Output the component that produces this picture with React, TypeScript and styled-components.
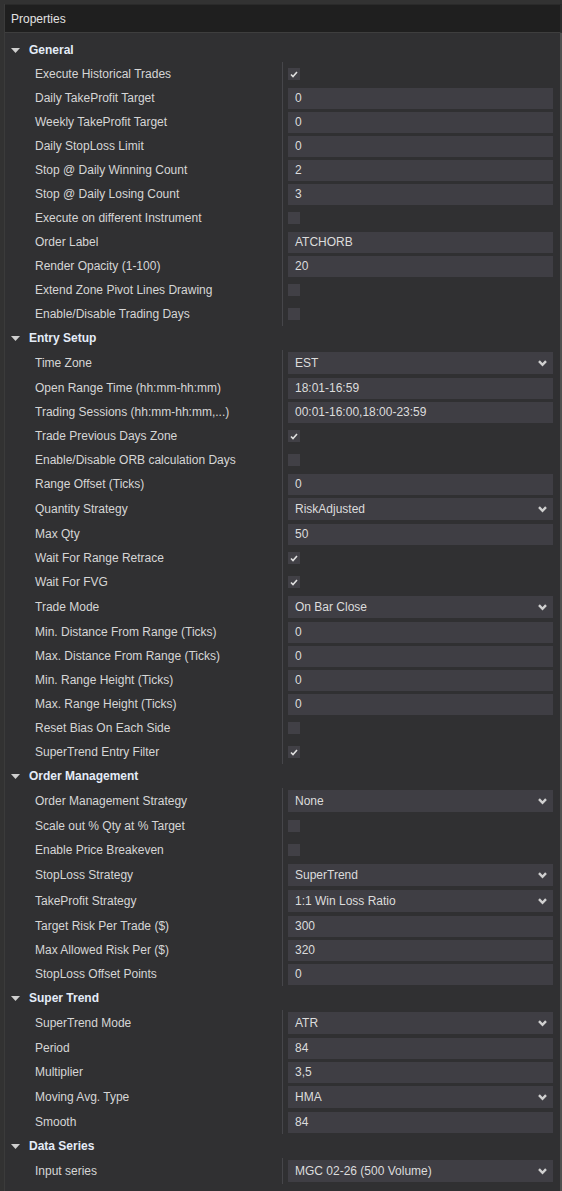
import React from "react";
import styled, { createGlobalStyle } from "styled-components";

const Global = createGlobalStyle`
  html, body { margin: 0; padding: 0; background: #323232; }
  body { font-family: "Liberation Sans", Arial, sans-serif; font-size: 12px; }
  #root { width: 562px; height: 1191px; overflow: hidden; }
`;

type Prop =
  | { label: string; kind: "text"; value: string }
  | { label: string; kind: "check"; value: boolean }
  | { label: string; kind: "select"; value: string };

type Section = { title: string; rows: Prop[] };

const t = (label: string, value: string): Prop => ({ label, kind: "text", value });
const c = (label: string, value: boolean): Prop => ({ label, kind: "check", value });
const s = (label: string, value: string): Prop => ({ label, kind: "select", value });

const sections: Section[] = [
  {
    title: "General",
    rows: [
      c("Execute Historical Trades", true),
      t("Daily TakeProfit Target", "0"),
      t("Weekly TakeProfit Target", "0"),
      t("Daily StopLoss Limit", "0"),
      t("Stop @ Daily Winning Count", "2"),
      t("Stop @ Daily Losing Count", "3"),
      c("Execute on different Instrument", false),
      t("Order Label", "ATCHORB"),
      t("Render Opacity (1-100)", "20"),
      c("Extend Zone Pivot Lines Drawing", false),
      c("Enable/Disable Trading Days", false),
    ],
  },
  {
    title: "Entry Setup",
    rows: [
      s("Time Zone", "EST"),
      t("Open Range Time (hh:mm-hh:mm)", "18:01-16:59"),
      t("Trading Sessions (hh:mm-hh:mm,...)", "00:01-16:00,18:00-23:59"),
      c("Trade Previous Days Zone", true),
      c("Enable/Disable ORB calculation Days", false),
      t("Range Offset (Ticks)", "0"),
      s("Quantity Strategy", "RiskAdjusted"),
      t("Max Qty", "50"),
      c("Wait For Range Retrace", true),
      c("Wait For FVG", true),
      s("Trade Mode", "On Bar Close"),
      t("Min. Distance From Range (Ticks)", "0"),
      t("Max. Distance From Range (Ticks)", "0"),
      t("Min. Range Height (Ticks)", "0"),
      t("Max. Range Height (Ticks)", "0"),
      c("Reset Bias On Each Side", false),
      c("SuperTrend Entry Filter", true),
    ],
  },
  {
    title: "Order Management",
    rows: [
      s("Order Management Strategy", "None"),
      c("Scale out % Qty at % Target", false),
      c("Enable Price Breakeven", false),
      s("StopLoss Strategy", "SuperTrend"),
      s("TakeProfit Strategy", "1:1 Win Loss Ratio"),
      t("Target Risk Per Trade ($)", "300"),
      t("Max Allowed Risk Per ($)", "320"),
      t("StopLoss Offset Points", "0"),
    ],
  },
  {
    title: "Super Trend",
    rows: [
      s("SuperTrend Mode", "ATR"),
      t("Period", "84"),
      t("Multiplier", "3,5"),
      s("Moving Avg. Type", "HMA"),
      t("Smooth", "84"),
    ],
  },
  {
    title: "Data Series",
    rows: [s("Input series", "MGC 02-26 (500 Volume)")],
  },
];

const Window = styled.div`
  margin: 4px 0 0 4px;
  width: 558px;
  height: 1187px;
  display: flex;
  flex-direction: column;
  border-left: 1px solid #3b3b3b;
  box-sizing: border-box;
`;

const TitleBar = styled.div`
  height: 29px;
  flex: none;
  box-sizing: border-box;
  background: #1f1f1f;
  border-top: 1px solid #2a2a2a;
  border-bottom: 1px solid #3e3e3e;
  border-right: 2px solid #2c2c2c;
  display: flex;
  align-items: center;
  padding-left: 6px;
  color: #e2e2e2;
  font-size: 12px;
`;

const Content = styled.div`
  flex: 1;
  background: #303032;
  border-right: 2px solid #4f4f4f;
  padding-top: 5px;
  display: flex;
  flex-direction: column;
`;

const SectionHeader = styled.div`
  height: 24px;
  display: flex;
  align-items: center;
  padding-left: 6px;
  gap: 9px;
  color: #e4ecf8;
  font-weight: bold;
  font-size: 12px;
`;

const Row = styled.div<{ $tall: boolean }>`
  height: ${(p) => (p.$tall ? 26 : 24)}px;
  display: flex;
  align-items: stretch;
`;

const Label = styled.div`
  width: 277px;
  flex: none;
  box-sizing: border-box;
  padding-left: 30px;
  display: flex;
  align-items: center;
  color: #d6d6d6;
  white-space: nowrap;
  overflow: hidden;
`;

const ValueCell = styled.div`
  flex: 1;
  border-left: 1px solid #46464a;
  padding: 0 7px 0 5px;
  display: flex;
  align-items: center;
`;

const TextBox = styled.div`
  flex: 1;
  height: 21px;
  background: #3f3e44;
  color: #dcdcdc;
  display: flex;
  align-items: center;
  padding-left: 7px;
`;

const SelectBox = styled.div`
  flex: 1;
  height: 22px;
  background: #3f3e44;
  color: #dcdcdc;
  display: flex;
  align-items: center;
  justify-content: space-between;
  padding: 0 6px 0 7px;
`;

const CheckBox = styled.div`
  width: 12px;
  height: 12px;
  background: #414046;
  display: flex;
  align-items: center;
  justify-content: center;
`;

const Triangle = () => (
  <svg width="9" height="5" viewBox="0 0 9 5">
    <polygon points="0,0 9,0 4.5,5" fill="#cfcfcf" />
  </svg>
);

const Chevron = () => (
  <svg width="9" height="7" viewBox="0 0 9 7">
    <polyline points="1,1.2 4.5,4.8 8,1.2" fill="none" stroke="#d0d0d0" strokeWidth="2.4" />
  </svg>
);

const Check = () => (
  <svg width="8" height="7" viewBox="0 0 8 7">
    <polyline points="1,3.5 3,5.5 7,1" fill="none" stroke="#e0e0e0" strokeWidth="1.6" />
  </svg>
);

const PropRow = ({ p }: { p: Prop }) => (
  <Row $tall={p.kind === "select"}>
    <Label>{p.label}</Label>
    <ValueCell>
      {p.kind === "text" && <TextBox>{p.value}</TextBox>}
      {p.kind === "check" && <CheckBox>{p.value && <Check />}</CheckBox>}
      {p.kind === "select" && (
        <SelectBox>
          <span>{p.value}</span>
          <Chevron />
        </SelectBox>
      )}
    </ValueCell>
  </Row>
);

export default function App() {
  return (
    <>
      <Global />
      <Window>
        <TitleBar>Properties</TitleBar>
        <Content>
          {sections.map((sec) => (
            <React.Fragment key={sec.title}>
              <SectionHeader>
                <Triangle />
                <span>{sec.title}</span>
              </SectionHeader>
              {sec.rows.map((r) => (
                <PropRow key={r.label} p={r} />
              ))}
            </React.Fragment>
          ))}
        </Content>
      </Window>
    </>
  );
}
